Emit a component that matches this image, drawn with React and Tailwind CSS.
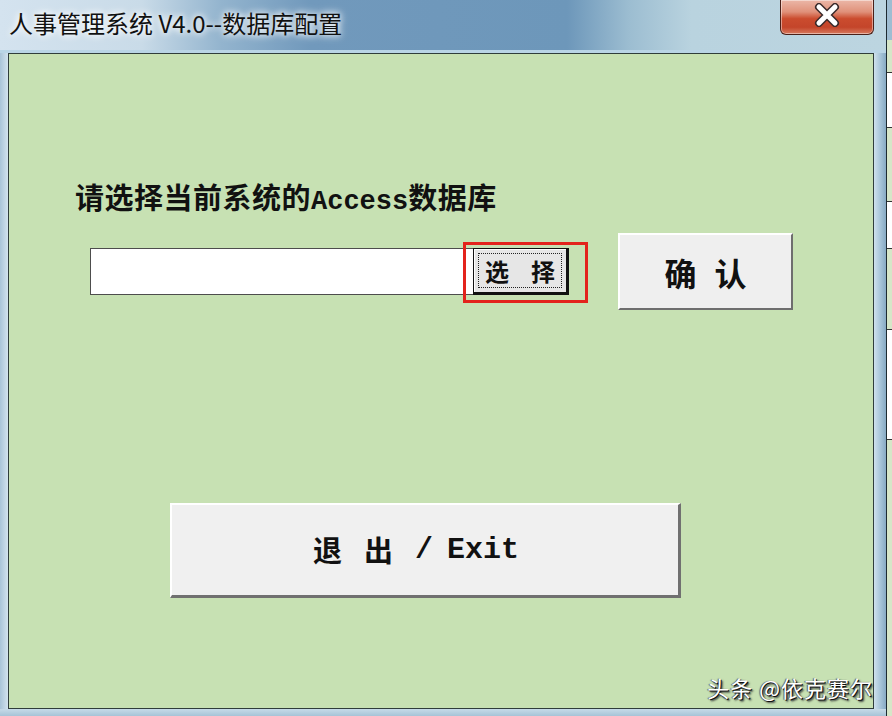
import React from 'react'

// Windows 7 style dialog: database config for HR system
function CloseButton() {
    return (
        <div className="mr-[12px] w-[94px] h-[35px] rounded-b-[6px] border border-t-0 border-[#4a2018] bg-[linear-gradient(to_bottom,#ebb7a8_0%,#e0917a_35%,#cb4c2e_55%,#c4452a_80%,#d77a5e_100%)] shadow-[inset_0_0_0_1px_rgba(255,255,255,0.45)] flex justify-center pt-[3px]">
            <svg width="28" height="24" viewBox="0 0 28 24">
                <path d="M6 4 L22 20 M22 4 L6 20" stroke="#3a2a2a" strokeWidth="8" strokeLinecap="round" />
                <path d="M6 4 L22 20 M22 4 L6 20" stroke="#ffffff" strokeWidth="5" strokeLinecap="round" />
            </svg>
        </div>
    )
}

export default function App() {
    return (
        <div className="w-[892px] h-[716px] overflow-hidden flex bg-[#9fbdd2] font-['Noto_Sans_CJK_SC',sans-serif]">
            {/* dialog window */}
            <div className="w-[886px] flex flex-col">
                {/* title bar */}
                <div className="h-[53px] flex bg-[linear-gradient(to_right,#d4e3ef_0%,#c9dbe8_16%,#93b4ce_25%,#7199bc_35%,#6d97ba_64%,#9cbdd1_71%,#b9d3df_78%,#bcd5e0_100%)] border-b-[3px] border-[#b9d5e6]">
                    <div className="pl-[9px] pt-[5px] text-[24px] leading-[36px] text-[#111] [text-shadow:0_0_6px_#ffffff,0_0_10px_#ffffff]">
                        人事管理系统 V4.0--数据库配置
                    </div>
                    <div className="ml-auto">
                        <CloseButton />
                    </div>
                </div>

                <div className="flex-1 flex">
                    {/* left frame */}
                    <div className="w-[8px] bg-[linear-gradient(to_right,#a9c4d8,#d3e3ee)]" />

                    {/* green panel */}
                    <div className="relative flex-1 flex flex-col bg-[#c7e1b3] border border-[#2f3d3b]">
                        <div className="ml-[66px] mt-[127px] h-[30px] text-[29px] leading-[30px] font-bold text-[#111] tracking-[0.5px] whitespace-nowrap">
                            请选择当前系统的<span className="font-['Liberation_Mono',monospace] text-[27px] tracking-normal">Access</span>数据库
                        </div>

                        <div className="mt-[22px] flex items-center">
                            <div className="ml-[81px] w-[383px] h-[47px] bg-white border border-[#4d4d4d] border-r-0" />
                            <div className="relative w-[96px] h-[47px]">
                                <div className="w-full h-full bg-[#e6e6e6] border border-[#111] border-r-[3px] border-b-[3px] shadow-[inset_1px_1px_0_#ffffff] p-[4px]">
                                    <div className="w-full h-full border border-dotted border-[#222] flex items-center justify-center gap-[22px] text-[24px] font-bold leading-none text-[#111]">
                                        <span>选</span>
                                        <span>择</span>
                                    </div>
                                </div>
                                {/* red highlight box */}
                                <div className="absolute left-[-10px] top-[-6px] w-[125px] h-[61px] border-[3px] border-[#e3231c]" />
                            </div>
                            <button className="ml-[49px] w-[175px] h-[77px] bg-[#efefef] border-2 border-t-white border-l-white border-r-[#6e6e6e] border-b-[#6e6e6e] flex items-center justify-center gap-[18px] text-[32px] font-bold text-[#111]">
                                <span>确</span>
                                <span>认</span>
                            </button>
                        </div>

                        <button className="ml-[161px] mt-[193px] w-[511px] h-[95px] bg-[#f0f0f0] border-2 border-t-white border-l-white border-r-[3px] border-b-[3px] border-r-[#707070] border-b-[#707070] flex items-center justify-center text-[29px] font-bold text-[#111] pr-[18px]">
                            <span>退</span>
                            <span className="ml-[22px]">出</span>
                            <span className="ml-[22px] font-['Liberation_Mono',monospace] text-[30px]">/</span>
                            <span className="ml-[14px] font-['Liberation_Mono',monospace] text-[30px]">Exit</span>
                        </button>

                        {/* watermark */}
                        <div className="absolute right-[0px] bottom-[10px] text-[22px] leading-none text-white tracking-[1px] [text-shadow:1px_1px_0_#111,2px_2px_2px_#333,-1px_0_1px_#555]">
                            头条 @依克赛尔
                        </div>
                    </div>

                    {/* right frame */}
                    <div className="w-[12px] bg-[linear-gradient(to_right,#cfe1ec,#a9c6da_50%,#87aac4)]" />
                </div>

                {/* bottom frame */}
                <div className="h-[7px] bg-[linear-gradient(to_bottom,#c7dbe8,#a6c3d7)]" />
            </div>

            {/* background sheet glimpse on the right */}
            <div className="w-[1px] bg-[#1d2a30]" />
            <div className="w-[5px] flex flex-col">
                <div className="h-[40px] bg-[#9fbdd2]" />
                <div className="h-[33px] bg-[#d6e6c8] border-b border-[#333]" />
                <div className="h-[55px] bg-white border-b border-[#333]" />
                <div className="h-[74px] bg-[#d6e6c8] border-b border-[#333]" />
                <div className="h-[47px] bg-white border-b border-[#333]" />
                <div className="h-[81px] bg-[#d6e6c8] border-b border-[#333]" />
                <div className="h-[110px] bg-white border-b border-[#333]" />
                <div className="flex-1 bg-[#d6e6c8]" />
            </div>
        </div>
    )
}
